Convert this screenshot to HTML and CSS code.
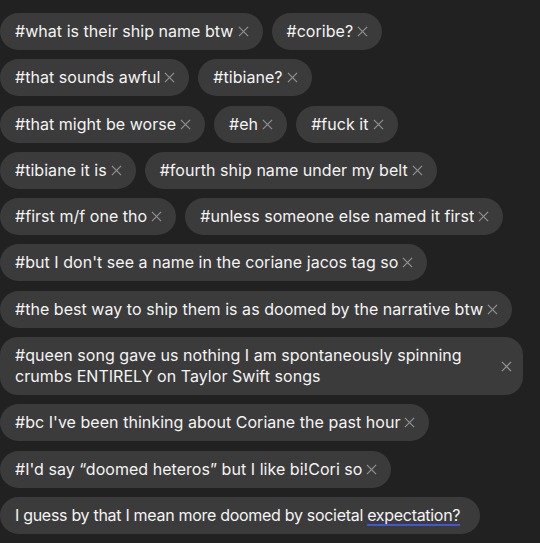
FILE: index.html
```html
<!DOCTYPE html>
<html>
<head>
<meta charset="utf-8">
<link rel="stylesheet" href="styles.css">
</head>
<body>
<div class="tags">
  <span class="chip"><span class="label">#what is their ship name btw</span><svg class="x" viewBox="0 0 12 12"><path d="M1 1L11 11M11 1L1 11"/></svg></span>
  <span class="chip"><span class="label">#coribe?</span><svg class="x" viewBox="0 0 12 12"><path d="M1 1L11 11M11 1L1 11"/></svg></span>
  <span class="chip"><span class="label">#that sounds awful</span><svg class="x" viewBox="0 0 12 12"><path d="M1 1L11 11M11 1L1 11"/></svg></span>
  <span class="chip"><span class="label">#tibiane?</span><svg class="x" viewBox="0 0 12 12"><path d="M1 1L11 11M11 1L1 11"/></svg></span>
  <span class="chip"><span class="label">#that might be worse</span><svg class="x" viewBox="0 0 12 12"><path d="M1 1L11 11M11 1L1 11"/></svg></span>
  <span class="chip"><span class="label">#eh</span><svg class="x" viewBox="0 0 12 12"><path d="M1 1L11 11M11 1L1 11"/></svg></span>
  <span class="chip"><span class="label">#fuck it</span><svg class="x" viewBox="0 0 12 12"><path d="M1 1L11 11M11 1L1 11"/></svg></span>
  <span class="chip"><span class="label">#tibiane it is</span><svg class="x" viewBox="0 0 12 12"><path d="M1 1L11 11M11 1L1 11"/></svg></span>
  <span class="chip"><span class="label">#fourth ship name under my belt</span><svg class="x" viewBox="0 0 12 12"><path d="M1 1L11 11M11 1L1 11"/></svg></span>
  <span class="chip"><span class="label">#first m/f one tho</span><svg class="x" viewBox="0 0 12 12"><path d="M1 1L11 11M11 1L1 11"/></svg></span>
  <span class="chip"><span class="label">#unless someone else named it first</span><svg class="x" viewBox="0 0 12 12"><path d="M1 1L11 11M11 1L1 11"/></svg></span>
  <span class="chip"><span class="label">#but I don't see a name in the coriane jacos tag so</span><svg class="x" viewBox="0 0 12 12"><path d="M1 1L11 11M11 1L1 11"/></svg></span>
  <span class="chip"><span class="label">#the best way to ship them is as doomed by the narrative btw</span><svg class="x" viewBox="0 0 12 12"><path d="M1 1L11 11M11 1L1 11"/></svg></span>
  <span class="chip wide"><span class="label">#queen song gave us nothing I am spontaneously spinning crumbs ENTIRELY on Taylor Swift songs</span><svg class="x" viewBox="0 0 12 12"><path d="M1 1L11 11M11 1L1 11"/></svg></span>
  <span class="chip"><span class="label">#bc I've been thinking about Coriane the past hour</span><svg class="x" viewBox="0 0 12 12"><path d="M1 1L11 11M11 1L1 11"/></svg></span>
  <span class="chip"><span class="label">#I'd say “doomed heteros” but I like bi!Cori so</span><svg class="x" viewBox="0 0 12 12"><path d="M1 1L11 11M11 1L1 11"/></svg></span>
  <span class="chip input"><span class="label">I guess by that I mean more doomed by societal <span class="spell">expectation?</span></span></span>
</div>
</body>
</html>
```

FILE: styles.css
```css
html, body {
  margin: 0;
  padding: 0;
  background: #212121;
}
body {
  font-family: Inter, "Noto Sans", sans-serif;
  font-size: 16px;
  letter-spacing: 0.04px;
  color: #f4f4f4;
}
.tags {
  display: flex;
  flex-wrap: wrap;
  align-items: flex-start;
  gap: 9.3px 9px;
  padding-top: 13px;
  width: 525px;
}
.chip {
  display: inline-flex;
  align-items: center;
  background: #3b3b3b;
  border-radius: 19px;
  padding: 8px 14px 8px 15px;
  line-height: 21px;
  max-width: 100%;
  box-sizing: border-box;
}
.chip.wide {
  width: 523px;
  border-radius: 18px;
  padding-right: 11px;
}
.chip.wide .label {
  flex: 1;
  padding-right: 20px;
}
.label {
  white-space: normal;
}
.x {
  width: 11px;
  height: 11px;
  margin-left: 4px;
  flex: none;
  stroke: #8f8f8f;
  stroke-width: 1.4;
  fill: none;
}
.chip.input {
  padding-right: 20px;
  letter-spacing: -0.3px;
}
.spell {
  text-decoration: underline;
  text-decoration-color: #4157d8;
  text-decoration-thickness: 2px;
  text-underline-offset: 3px;
}
```
